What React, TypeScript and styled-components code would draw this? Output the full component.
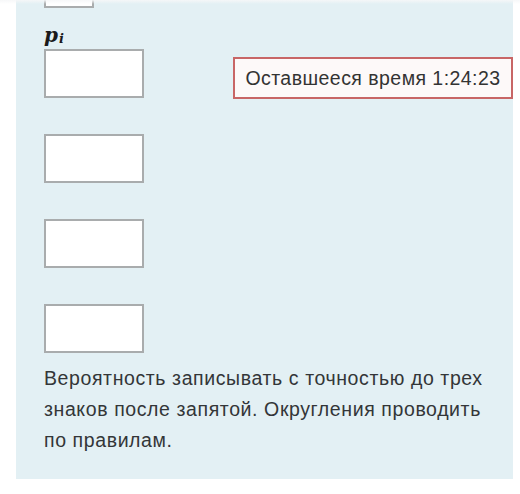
import React from "react";
import styled, { createGlobalStyle } from "styled-components";

const Global = createGlobalStyle`
  html, body { margin: 0; padding: 0; background: #ffffff; }
  body { font-family: "Liberation Sans", Arial, sans-serif; overflow: hidden; }
`;

const Page = styled.div`
  position: relative;
  width: 520px;
  height: 494px;
  overflow: hidden;
`;

const Panel = styled.div`
  margin: -41px 0 0 16px;
  width: 497px;
  box-sizing: border-box;
  padding: 0 14px 23px 28px;
  background: #e3f0f4;
  display: flex;
  flex-direction: column;
`;

const TopShade = styled.div`
  position: absolute;
  left: 0;
  top: 0;
  width: 100%;
  height: 4px;
  background: linear-gradient(to bottom, rgba(246, 247, 248, 0.95), rgba(246, 247, 248, 0));
`;

const Field = styled.div<{ $w: number }>`
  width: ${(p) => p.$w}px;
  height: 49px;
  box-sizing: border-box;
  border: 2px solid #a9acad;
  background: #ffffff;
  flex: none;
`;

const Label = styled.div`
  height: 41px;
  display: flex;
  align-items: flex-end;
  font-family: "DejaVu Serif", "Liberation Serif", serif;
  font-style: italic;
  font-weight: bold;
  font-size: 20px;
  color: #1a1a1a;
  line-height: 1;
  padding-bottom: 4px;
  box-sizing: border-box;
  sub { font-size: 13px; vertical-align: -3px; margin-left: 1px; }
`;

const Fields = styled.div`
  display: flex;
  flex-direction: column;
  gap: 36px;
`;

const Note = styled.p`
  margin: 10px 0 0 0;
  font-size: 19.5px;
  letter-spacing: 0.6px;
  line-height: 31px;
  color: #333638;
`;

const Timer = styled.div`
  position: absolute;
  top: 57px;
  left: 233px;
  width: 280px;
  height: 42px;
  box-sizing: border-box;
  border: 2px solid #c86666;
  background: #fdf9f9;
  display: flex;
  align-items: center;
  justify-content: center;
  font-size: 19.5px;
  letter-spacing: 0.45px;
  color: #333333;
`;

export default function App() {
  return (
    <Page>
      <Global />
      <Panel>
        <Field $w={50} />
        <Label>
          p<sub>i</sub>
        </Label>
        <Fields>
          <Field $w={100} />
          <Field $w={100} />
          <Field $w={100} />
          <Field $w={100} />
        </Fields>
        <Note>
          Вероятность записывать с точностью до трех знаков после запятой. Округления проводить по правилам.
        </Note>
      </Panel>
      <TopShade />
      <Timer>Оставшееся время 1:24:23</Timer>
    </Page>
  );
}
